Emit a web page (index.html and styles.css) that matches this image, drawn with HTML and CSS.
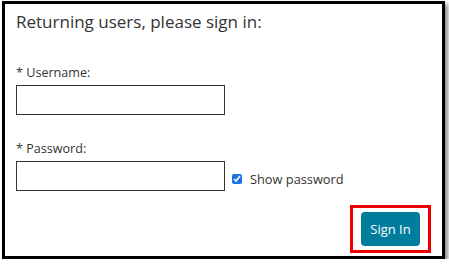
FILE: index.html
```html
<!DOCTYPE html>
<html lang="en">
<head>
<meta charset="utf-8">
<title>Sign in</title>
<link rel="stylesheet" href="styles.css">
</head>
<body>
<div class="frame">
  <h1 class="title">Returning users, please sign in:</h1>
  <form class="form">
    <label class="label" for="user">* Username:</label>
    <input class="field" id="user" type="text">
    <label class="label label-pw" for="pw">* Password:</label>
    <div class="pw-row">
      <input class="field" id="pw" type="text">
      <label class="show"><input class="check" type="checkbox" checked> Show password</label>
    </div>
    <div class="actions">
      <div class="highlight"><button type="button" class="btn">Sign In</button></div>
    </div>
  </form>
</div>
</body>
</html>
```

FILE: styles.css
```css
html, body {
  margin: 0;
  padding: 0;
  background: #fff;
}
body {
  font-family: "Open Sans", "Liberation Sans", sans-serif;
  color: #333;
  padding: 1px 0 0 2px;
}
.frame {
  box-sizing: border-box;
  width: 443px;
  height: 258px;
  border: 3px solid #000;
  box-shadow: 3px 3px 4px rgba(0,0,0,0.45);
  padding: 6px 11px 0 11px;
}
.title {
  margin: 0;
  font-size: 17px;
  font-weight: 400;
  line-height: 23px;
  color: #333;
}
.form {
  display: flex;
  flex-direction: column;
  margin-top: 31px;
}
.label {
  font-size: 12.6px;
  line-height: 18px;
  color: #333;
}
.label-pw {
  margin-top: 25px;
}
.field {
  box-sizing: border-box;
  width: 209px;
  height: 30px;
  border: 1px solid #333;
  margin: 3px 0 0 0;
  padding: 0;
  font: inherit;
}
.pw-row {
  display: flex;
  align-items: flex-end;
}
.show {
  display: flex;
  align-items: center;
  font-size: 12.8px;
  margin-left: 7px;
  margin-bottom: 3px;
  color: #333;
}
.check {
  width: 10px;
  height: 10px;
  margin: 0 8px 0 0;
  accent-color: #1a73e8;
}
.actions {
  display: flex;
  justify-content: flex-end;
  margin-top: 14px;
}
.highlight {
  border: 3px solid #e00;
  padding: 4px 8px 4px 8px;
}
.btn {
  background: #007c9c;
  color: #fff;
  border: none;
  border-radius: 4px;
  font-family: "Open Sans", "Liberation Sans", sans-serif;
  font-size: 13px;
  width: 59px;
  height: 34px;
  padding: 0;
}
```
